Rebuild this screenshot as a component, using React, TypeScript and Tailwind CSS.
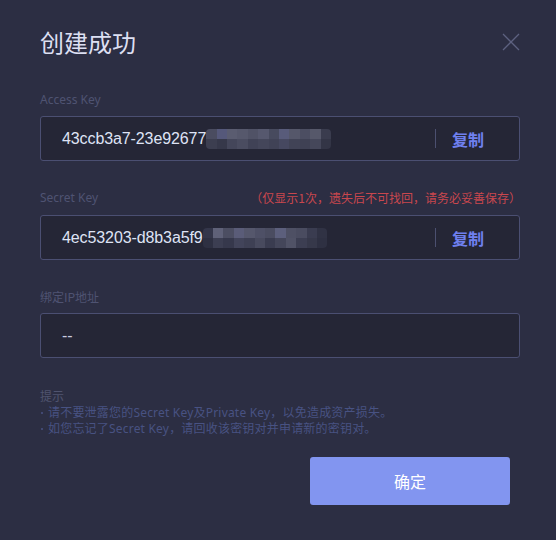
import React from "react";

const blocksA = [
  ["#4a4c60", "#55587a", "#5a5c70", "#56586c", "#505266", "#56586e", "#474a5e", "#585b7a", "#55576a", "#4c4e62", "#56586a", "#3a3c4e"],
  ["#3c3e50", "#36384a", "#44465a", "#4a4c60", "#404256", "#44465a", "#404256", "#464860", "#414356", "#3f4154", "#45475a", "#333546"],
];
const blocksB = [
  ["#34364a", "#5f6178", "#4c4e62", "#5a5c78", "#55576c", "#4e5066", "#4a4c60", "#5c5f7c", "#4e5064", "#4a4c60", "#3a3c50", "#303244"],
  ["#2e3042", "#3c3e52", "#36384c", "#42445a", "#3e4054", "#484a5e", "#3a3c50", "#44465a", "#505266", "#3c3e52", "#36384a", "#2e3042"],
];

function Pixelated({ rows }: { rows: string[][] }) {
  return (
    <div className="flex flex-col rounded-[4px] overflow-hidden">
      {rows.map((r, i) => (
        <div key={i} className="flex">
          {r.map((c, j) => (
            <div key={j} className="w-[10.4px] h-[10px]" style={{ backgroundColor: c }} />
          ))}
        </div>
      ))}
    </div>
  );
}

function KeyField({ value, rows }: { value: string; rows: string[][] }) {
  return (
    <div className="h-[45px] rounded-[3px] border border-[#4b4f72] bg-[#252636] flex items-center pl-[21px] pr-[35px]">
      <div className="flex-1 flex items-center">
        <span className="text-[16px] text-[#dfe3f5] font-['Liberation_Sans',Arial,sans-serif] tracking-[-0.1px]">{value}</span>
        <Pixelated rows={rows} />
      </div>
      <div className="w-px h-[19px] bg-[#4c5070] mr-[16px]" />
      <span className="text-[16px] font-bold text-[#6f80ef] font-['Noto_Sans_CJK_SC',sans-serif]">复制</span>
    </div>
  );
}

function Tip({ children }: { children: React.ReactNode }) {
  return (
    <div className="flex items-center text-[#485282] tracking-[0.2px]">
      <span className="w-[2px] h-[2px] rounded-full bg-[#485282] ml-[1px] mr-[5px]" />
      <span>{children}</span>
    </div>
  );
}

export default function App() {
  return (
    <div className="w-[556px] h-[540px] bg-[#2c2e43] font-['Noto_Sans','Noto_Sans_CJK_SC',sans-serif] pl-[40px] pr-[36px] pt-[26px]">
      <div className="flex items-center justify-between">
        <h1 className="text-[24px] leading-[32px] text-[#dcdff2] font-['Noto_Sans_CJK_SC',sans-serif]">创建成功</h1>
        <svg width="18" height="18" viewBox="0 0 18 18">
          <path d="M1 1L17 17M17 1L1 17" stroke="#5d6180" strokeWidth="1.3" />
        </svg>
      </div>

      <div className="mt-[34px] text-[12px] leading-[16px] text-[#4f5372]">Access Key</div>
      <div className="mt-[8px]">
        <KeyField value="43ccb3a7-23e92677" rows={blocksA} />
      </div>

      <div className="mt-[29px] flex justify-between items-center text-[12px] leading-[16px]">
        <span className="text-[#4f5372]">Secret Key</span>
        <span className="text-[#c9474e] font-['Noto_Sans_CJK_SC',sans-serif] mr-[-1px]">（仅显示1次，遗失后不可找回，请务必妥善保存）</span>
      </div>
      <div className="mt-[9px]">
        <KeyField value="4ec53203-d8b3a5f9" rows={blocksB} />
      </div>

      <div className="mt-[29px] text-[12px] leading-[16px] text-[#4f5372] font-['Noto_Sans_CJK_SC',sans-serif]">绑定IP地址</div>
      <div className="mt-[8px] h-[45px] rounded-[3px] border border-[#4b4f72] bg-[#252636] flex items-center pl-[21px]">
        <span className="text-[16px] text-[#c9cce0] font-['Liberation_Sans',Arial,sans-serif]">--</span>
      </div>

      <div className="mt-[31px] text-[12px] leading-[16px]">
        <div className="text-[#50546f]">提示</div>
        <Tip>请不要泄露您的Secret Key及Private Key，以免造成资产损失。</Tip>
        <Tip>如您忘记了Secret Key，请回收该密钥对并申请新的密钥对。</Tip>
      </div>

      <div className="mt-[20px] flex justify-end pr-[10px]">
        <button className="w-[200px] h-[48px] rounded-[3px] bg-[#8295f0] text-white text-[16px] font-['Noto_Sans_CJK_SC',sans-serif]">确定</button>
      </div>
    </div>
  );
}
